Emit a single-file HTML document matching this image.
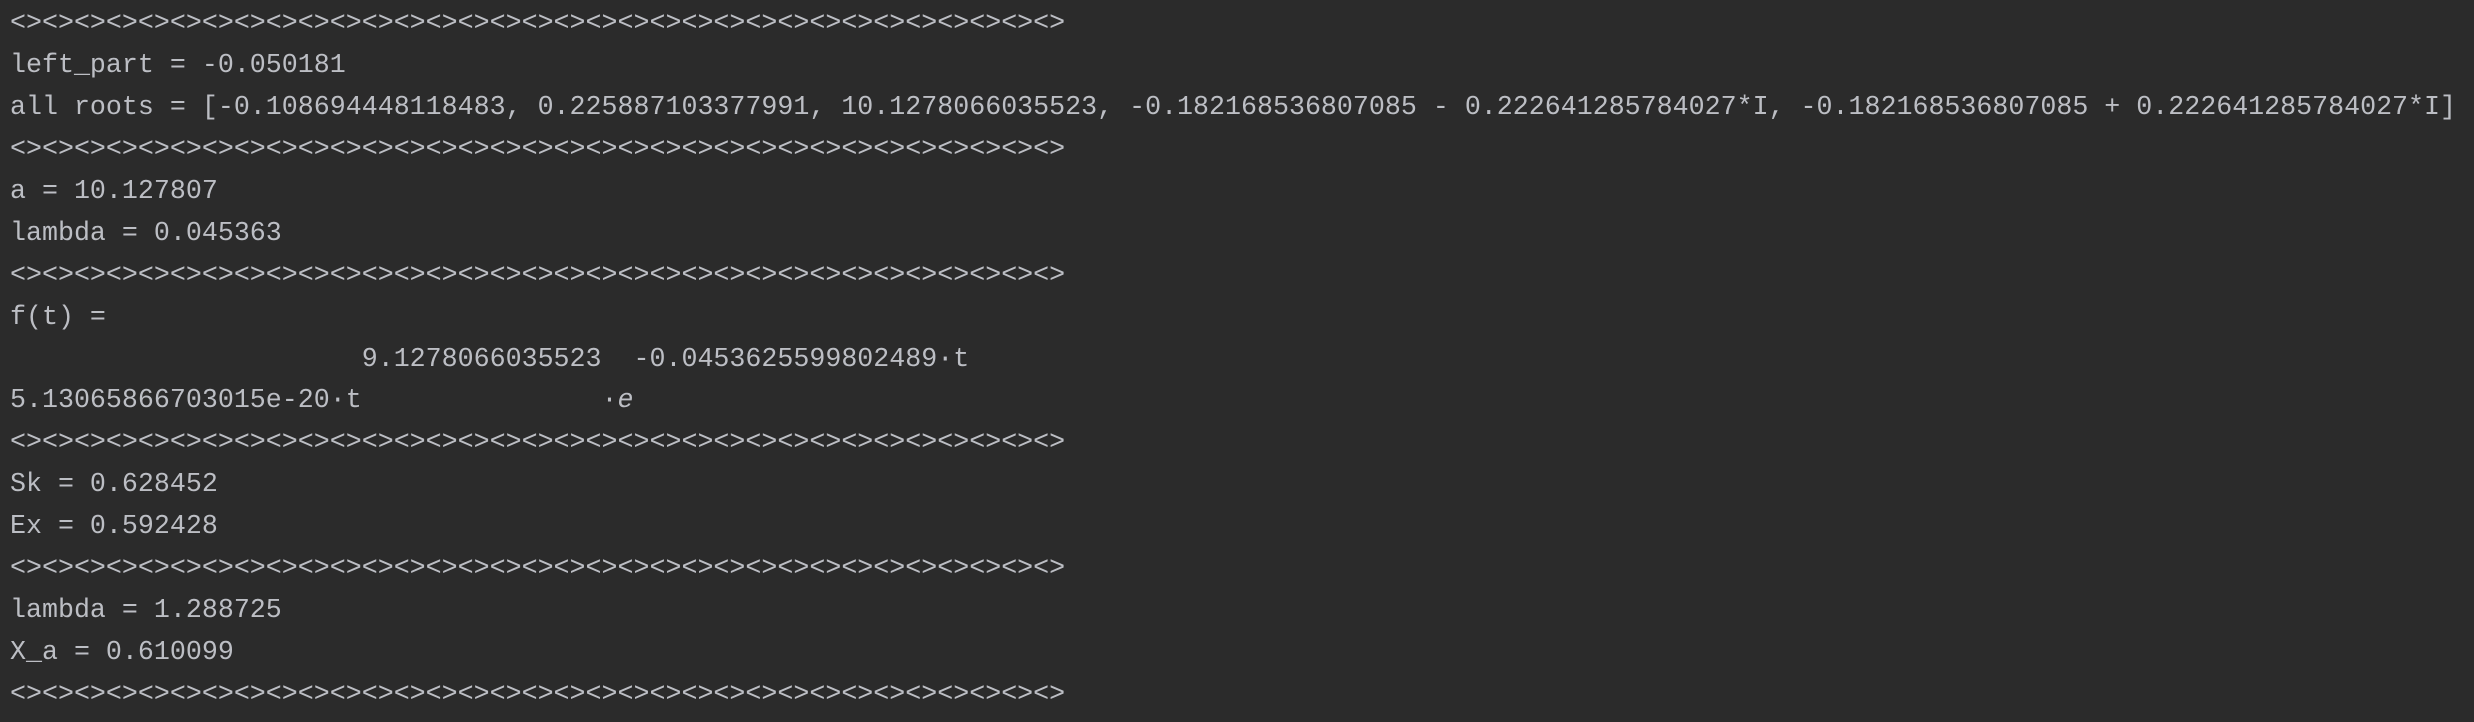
<!DOCTYPE html>
<html><head><style>
html,body{margin:0;background:#2b2b2b;width:2474px;height:722px;overflow:hidden}
pre{margin:0;padding:4px 0 0 10px;font-family:"Liberation Mono",monospace;font-size:26.65px;line-height:41.94px;color:#bcbec4}
</style></head><body><pre>&lt;&gt;&lt;&gt;&lt;&gt;&lt;&gt;&lt;&gt;&lt;&gt;&lt;&gt;&lt;&gt;&lt;&gt;&lt;&gt;&lt;&gt;&lt;&gt;&lt;&gt;&lt;&gt;&lt;&gt;&lt;&gt;&lt;&gt;&lt;&gt;&lt;&gt;&lt;&gt;&lt;&gt;&lt;&gt;&lt;&gt;&lt;&gt;&lt;&gt;&lt;&gt;&lt;&gt;&lt;&gt;&lt;&gt;&lt;&gt;&lt;&gt;&lt;&gt;&lt;&gt;
left_part = -0.050181
all roots = [-0.108694448118483, 0.225887103377991, 10.1278066035523, -0.182168536807085 - 0.222641285784027*I, -0.182168536807085 + 0.222641285784027*I]
&lt;&gt;&lt;&gt;&lt;&gt;&lt;&gt;&lt;&gt;&lt;&gt;&lt;&gt;&lt;&gt;&lt;&gt;&lt;&gt;&lt;&gt;&lt;&gt;&lt;&gt;&lt;&gt;&lt;&gt;&lt;&gt;&lt;&gt;&lt;&gt;&lt;&gt;&lt;&gt;&lt;&gt;&lt;&gt;&lt;&gt;&lt;&gt;&lt;&gt;&lt;&gt;&lt;&gt;&lt;&gt;&lt;&gt;&lt;&gt;&lt;&gt;&lt;&gt;&lt;&gt;
a = 10.127807
lambda = 0.045363
&lt;&gt;&lt;&gt;&lt;&gt;&lt;&gt;&lt;&gt;&lt;&gt;&lt;&gt;&lt;&gt;&lt;&gt;&lt;&gt;&lt;&gt;&lt;&gt;&lt;&gt;&lt;&gt;&lt;&gt;&lt;&gt;&lt;&gt;&lt;&gt;&lt;&gt;&lt;&gt;&lt;&gt;&lt;&gt;&lt;&gt;&lt;&gt;&lt;&gt;&lt;&gt;&lt;&gt;&lt;&gt;&lt;&gt;&lt;&gt;&lt;&gt;&lt;&gt;&lt;&gt;
f(t) =
                      9.1278066035523  -0.0453625599802489·t
5.13065866703015e-20·t               ·<i>e</i>
&lt;&gt;&lt;&gt;&lt;&gt;&lt;&gt;&lt;&gt;&lt;&gt;&lt;&gt;&lt;&gt;&lt;&gt;&lt;&gt;&lt;&gt;&lt;&gt;&lt;&gt;&lt;&gt;&lt;&gt;&lt;&gt;&lt;&gt;&lt;&gt;&lt;&gt;&lt;&gt;&lt;&gt;&lt;&gt;&lt;&gt;&lt;&gt;&lt;&gt;&lt;&gt;&lt;&gt;&lt;&gt;&lt;&gt;&lt;&gt;&lt;&gt;&lt;&gt;&lt;&gt;
Sk = 0.628452
Ex = 0.592428
&lt;&gt;&lt;&gt;&lt;&gt;&lt;&gt;&lt;&gt;&lt;&gt;&lt;&gt;&lt;&gt;&lt;&gt;&lt;&gt;&lt;&gt;&lt;&gt;&lt;&gt;&lt;&gt;&lt;&gt;&lt;&gt;&lt;&gt;&lt;&gt;&lt;&gt;&lt;&gt;&lt;&gt;&lt;&gt;&lt;&gt;&lt;&gt;&lt;&gt;&lt;&gt;&lt;&gt;&lt;&gt;&lt;&gt;&lt;&gt;&lt;&gt;&lt;&gt;&lt;&gt;
lambda = 1.288725
X_a = 0.610099
&lt;&gt;&lt;&gt;&lt;&gt;&lt;&gt;&lt;&gt;&lt;&gt;&lt;&gt;&lt;&gt;&lt;&gt;&lt;&gt;&lt;&gt;&lt;&gt;&lt;&gt;&lt;&gt;&lt;&gt;&lt;&gt;&lt;&gt;&lt;&gt;&lt;&gt;&lt;&gt;&lt;&gt;&lt;&gt;&lt;&gt;&lt;&gt;&lt;&gt;&lt;&gt;&lt;&gt;&lt;&gt;&lt;&gt;&lt;&gt;&lt;&gt;&lt;&gt;&lt;&gt;</pre></body></html>
